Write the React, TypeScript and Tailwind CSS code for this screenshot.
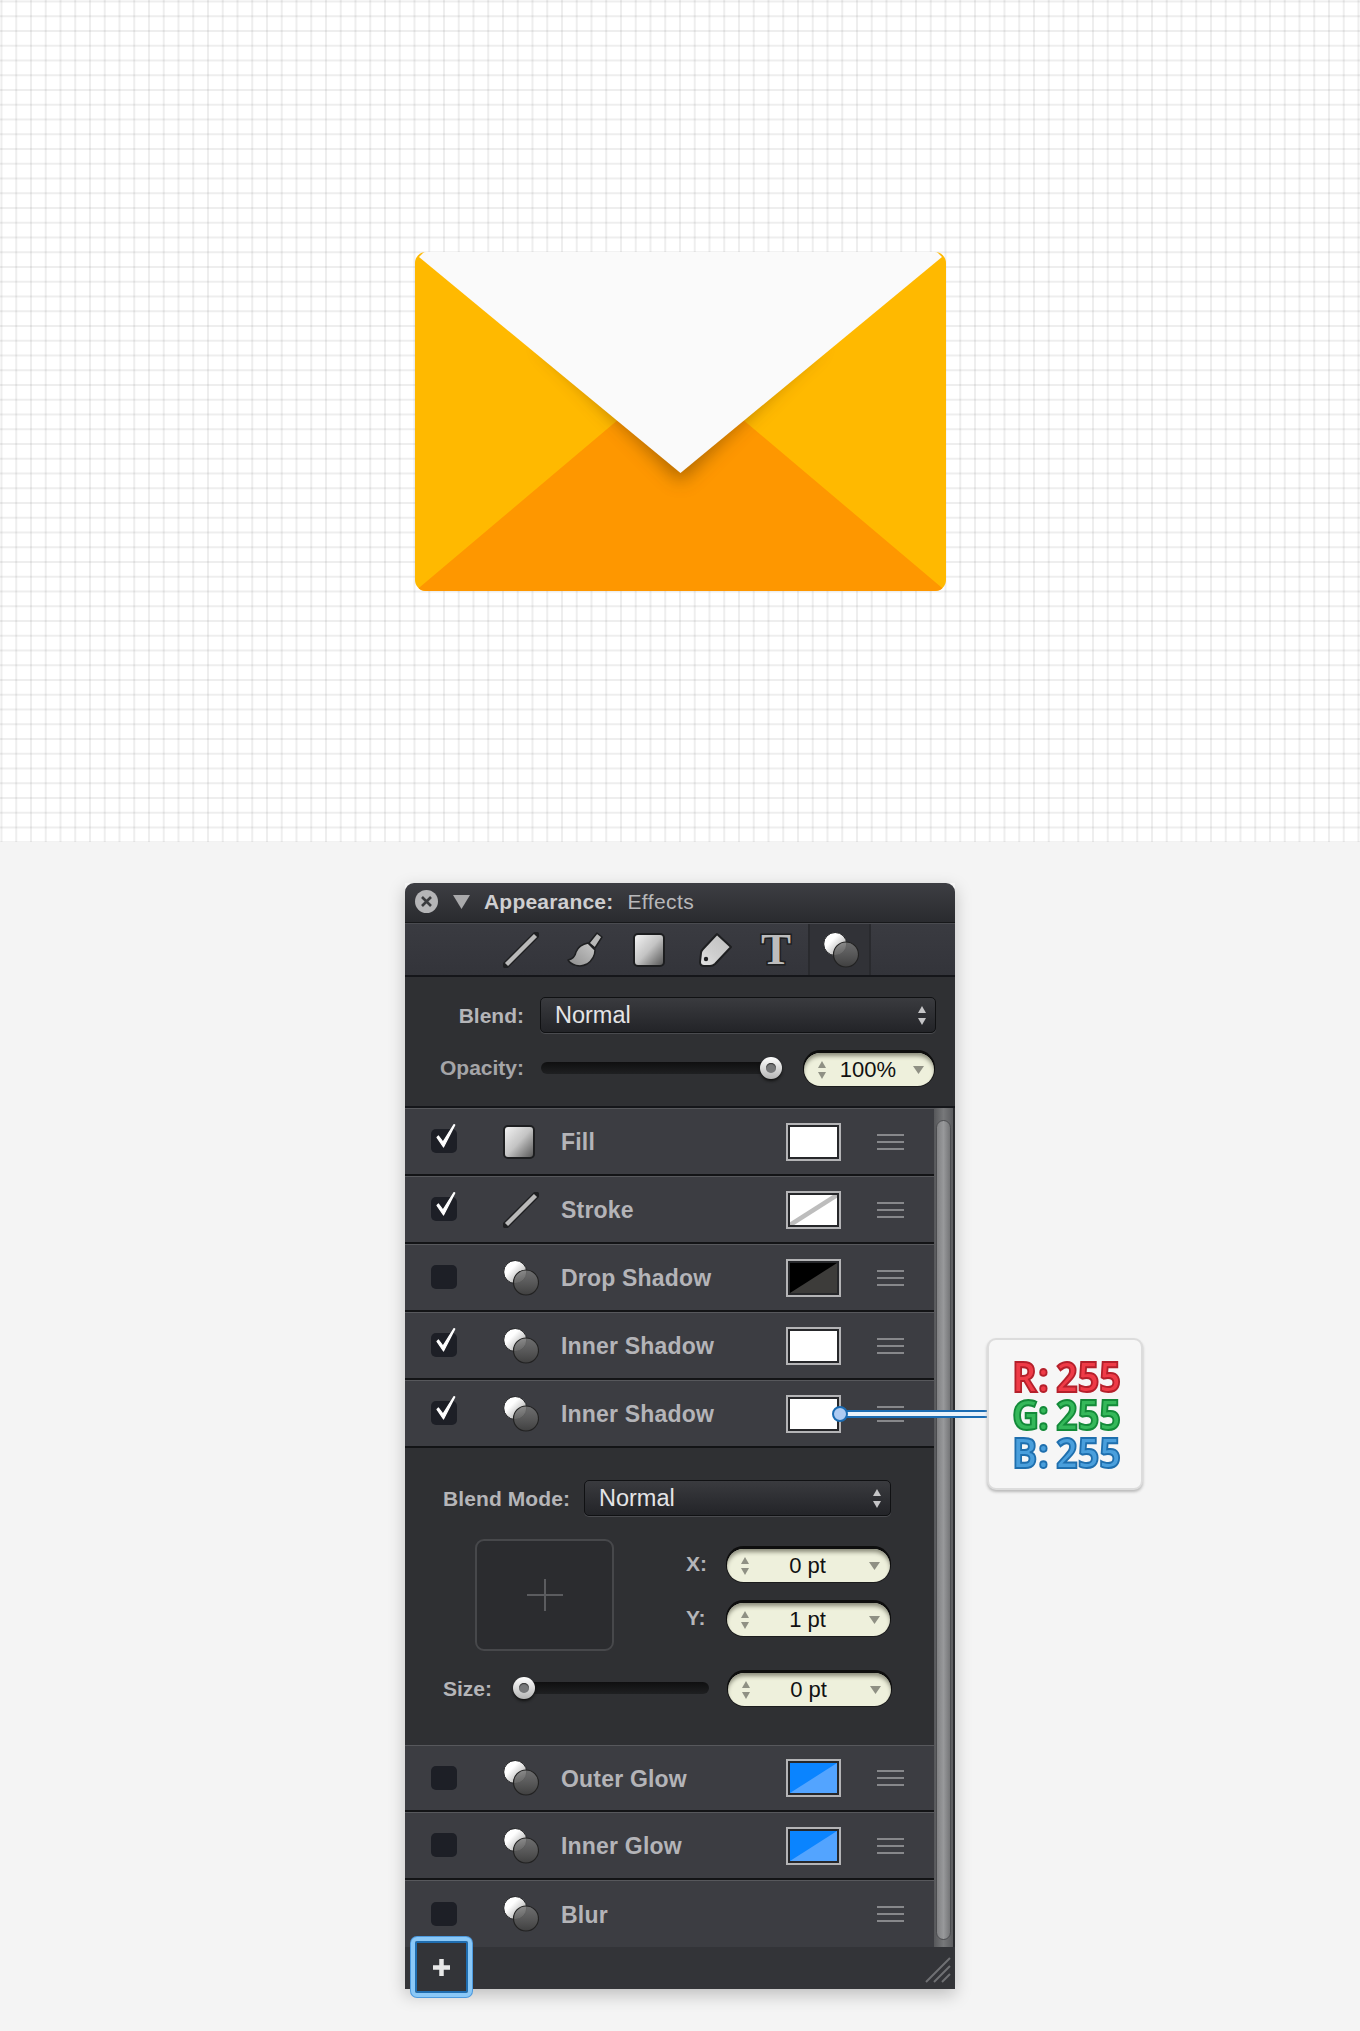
import React from 'react';

const sans = { fontFamily: '"Liberation Sans", Arial, sans-serif' };

function Envelope() {
  return (
    <svg width="531" height="339" viewBox="0 0 531 339">
      <defs>
        <clipPath id="env">
          <rect width="531" height="339" rx="11" />
        </clipPath>
        <filter id="soft" x="-20%" y="-20%" width="140%" height="140%">
          <feGaussianBlur stdDeviation="9" />
        </filter>
      </defs>
      <g clipPath="url(#env)">
        <rect width="531" height="339" fill="#ffb900" />
        <path d="M5 335 L265.5 115 L526 335 L531 339 L0 339 Z" fill="#fe9700" />
        <path d="M125 92 L406 92 L265.5 230 Z" fill="#6f4300" opacity="0.55" filter="url(#soft)" />
        <path d="M4 5 L9 0 L522 0 L527 5 L265.5 221 Z" fill="#fafafa" />
      </g>
    </svg>
  );
}

function GradSquare() {
  return (
    <div className="h-[34px] w-[32px] rounded-[5px] border-2 border-[#1d1e20] bg-gradient-to-br from-[#f2f2f2] via-[#c4c4c4] to-[#5a5a5a]" />
  );
}

function EffectIcon() {
  return (
    <svg width="36" height="36" viewBox="0 0 36 36">
      <defs>
        <linearGradient id="w" x1="0" y1="0" x2="1" y2="1">
          <stop offset="0.35" stopColor="#ffffff" />
          <stop offset="1" stopColor="#8c8c8c" />
        </linearGradient>
        <linearGradient id="d" x1="0" y1="0" x2="0" y2="1">
          <stop offset="0" stopColor="#7a7a7a" stopOpacity="0.8" />
          <stop offset="1" stopColor="#404040" stopOpacity="0.95" />
        </linearGradient>
      </defs>
      <circle cx="12.2" cy="12" r="11.5" fill="url(#w)" stroke="#1e1f21" strokeWidth="1" />
      <circle cx="23" cy="22.5" r="12.5" fill="url(#d)" stroke="#222222" strokeWidth="1.2" />
    </svg>
  );
}

function LineIcon({ id }: { id: string }) {
  return (
    <svg width="36" height="36" viewBox="0 0 36 36">
      <defs>
        <linearGradient id={id} x1="1" y1="0" x2="0" y2="1">
          <stop offset="0" stopColor="#e2e2e2" />
          <stop offset="1" stopColor="#a8a8a8" />
        </linearGradient>
      </defs>
      <path d="M3 33 L33 3" stroke="#1e1f21" strokeWidth="7" strokeLinecap="round" />
      <path d="M3.5 32.5 L32.5 3.5" stroke="#b9b9b9" strokeWidth="4.4" />
    </svg>
  );
}

function BrushIcon() {
  return (
    <svg width="36" height="36" viewBox="0 0 36 36">
      <defs>
        <linearGradient id="br" x1="1" y1="0" x2="0" y2="1">
          <stop offset="0" stopColor="#c8c8c8" />
          <stop offset="1" stopColor="#8d8d8d" />
        </linearGradient>
      </defs>
      <path d="M30 1 L35 5 L28 16 L22 11 Z" fill="#b8b8b8" stroke="#1e1f21" strokeWidth="1.5" strokeLinejoin="round" />
      <path
        d="M21 11 C16 12 11 15 9 20 C8 25 6 27 1 28 C4 33 13 36 20 32 C26 28 28 23 28 18 Z"
        fill="url(#br)"
        stroke="#1e1f21"
        strokeWidth="1.5"
        strokeLinejoin="round"
      />
    </svg>
  );
}

function TagIcon() {
  return (
    <svg width="36" height="36" viewBox="0 0 36 36">
      <defs>
        <linearGradient id="tg" x1="1" y1="0" x2="0" y2="1">
          <stop offset="0" stopColor="#bdbdbd" />
          <stop offset="0.6" stopColor="#cfcfcf" />
          <stop offset="1" stopColor="#e4e4e4" />
        </linearGradient>
      </defs>
      <path
        d="M19 2 L33 15 L17 32 Q15 34 12 34 L6 34 Q2 34 2 30 L3 21 Q3 19 5 17 Z"
        fill="url(#tg)"
        stroke="#1e1f21"
        strokeWidth="2"
        strokeLinejoin="round"
      />
      <circle cx="8" cy="27" r="2.2" fill="#1e1f21" />
    </svg>
  );
}

function UpDown({ color = '#c5c5c7', w = 7, h = 6, gap = 5 }: { color?: string; w?: number; h?: number; gap?: number }) {
  return (
    <svg width={w * 2} height={h * 2 + gap} viewBox={`0 0 ${w * 2} ${h * 2 + gap}`}>
      <path d={`M${w} 0 L${w * 2} ${h} L0 ${h} Z`} fill={color} />
      <path d={`M0 ${h + gap} L${w * 2} ${h + gap} L${w} ${h * 2 + gap} Z`} fill={color} />
    </svg>
  );
}

function Select({ className }: { className: string }) {
  return (
    <div
      className={`flex h-9 items-center justify-between rounded-[5px] border border-[#101113] bg-gradient-to-b from-[#3a3b3f] to-[#232428] pr-[9px] pl-[14px] text-[23.5px] text-[#e4e4e6] shadow-[0_1px_0_#4a4b4f] ${className}`}
    >
      <span className="pt-[2px]">Normal</span>
      <UpDown w={4} h={7} gap={5} />
    </div>
  );
}

function Pill({ value, className = '' }: { value: string; className?: string }) {
  return (
    <div
      className={`mt-[3px] flex h-[33px] items-center rounded-full bg-[#eef0dc] pr-[10px] pl-[14px] text-[22px] text-[#111] shadow-[inset_0_4px_4px_-1px_#8a8b7a,0_-2px_0_1px_#0e0e0e,0_0_0_1px_#1c1c1d] ${className}`}
    >
      <UpDown color="#8f9084" w={4} h={7} gap={4} />
      <span className="flex-1 pr-[3px] text-center">{value}</span>
      <svg width="11" height="8" viewBox="0 0 11 8">
        <path d="M0 0 L11 0 L5.5 8 Z" fill="#8f9084" />
      </svg>
    </div>
  );
}

function Knob({ className }: { className: string }) {
  return (
    <div
      className={`absolute top-[-5px] flex h-[22px] w-[22px] items-center justify-center rounded-full bg-gradient-to-b from-white to-[#b5b5b5] shadow-[0_2px_3px_#111] ${className}`}
    >
      <div className="h-[10px] w-[10px] rounded-full bg-[#77787a] shadow-[inset_0_1px_1px_#333]" />
    </div>
  );
}

function Handle() {
  return (
    <div className="flex w-[27px] flex-col gap-[5px]">
      <div className="h-[2px] bg-[#87888b]" />
      <div className="h-[2px] bg-[#87888b]" />
      <div className="h-[2px] bg-[#87888b]" />
    </div>
  );
}

function Check() {
  return (
    <svg width="26" height="36" viewBox="0 0 26 36" className="absolute top-[-10px] left-[-1px]">
      <path d="M7 18.5 L13.5 28 L24.8 6 L24 5.6 L13 23 L8.5 17 Z" fill="#ffffff" stroke="#ffffff" strokeWidth="1.2" strokeLinejoin="round" />
    </svg>
  );
}

type Swatch = 'white' | 'stroke' | 'black' | 'blue' | null;

function SwatchBox({ kind }: { kind: Swatch }) {
  if (!kind) return <div className="h-[38px] w-[55px]" />;
  return (
    <div className="h-[38px] w-[55px] border-2 border-[#b4b4b6] bg-[#26272a] p-[2px]">
      {kind === 'white' && <div className="h-full w-full bg-white" />}
      {kind === 'stroke' && (
        <svg className="block h-full w-full" viewBox="0 0 47 30" preserveAspectRatio="none">
          <rect width="47" height="30" fill="#fff" />
          <path d="M0 30 L47 0" stroke="#bdbdbd" strokeWidth="4.5" />
        </svg>
      )}
      {kind === 'black' && (
        <svg className="block h-full w-full" viewBox="0 0 47 30" preserveAspectRatio="none">
          <rect width="47" height="30" fill="#3d3c3a" />
          <path d="M0 0 H47 L0 30 Z" fill="#000" />
        </svg>
      )}
      {kind === 'blue' && (
        <svg className="block h-full w-full" viewBox="0 0 47 30" preserveAspectRatio="none">
          <rect width="47" height="30" fill="#53a4ff" />
          <path d="M0 0 H47 L0 30 Z" fill="#0a84ff" />
        </svg>
      )}
    </div>
  );
}

function Row({ label, checked, icon, swatch, h = 68, last = false }: { label: string; checked: boolean; icon: React.ReactNode; swatch: Swatch; h?: number; last?: boolean }) {
  return (
    <div
      className={`flex items-center border-t border-t-[#57585c] bg-[#3c3d42] pl-[26px] ${last ? '' : 'border-b-2 border-b-[#131416]'}`}
      style={{ height: h }}
    >
      <div className="relative -mt-px h-6 w-[26px] rounded-[5px] bg-[#1d1f26]">{checked && <Check />}</div>
      <div className="ml-[46px] flex w-[36px] justify-start">{icon}</div>
      <div className="ml-[22px] flex-1 pt-[2px] text-[23px] font-bold tracking-[0.2px] text-[#b4b4b8]">{label}</div>
      <SwatchBox kind={swatch} />
      <div className="mr-[30px] ml-[36px]">
        <Handle />
      </div>
    </div>
  );
}

function Callout() {
  const lines = [
    { l: 'R', fill: 'text-[#ef3b47] [-webkit-text-stroke:2px_#b5202b]' },
    { l: 'G', fill: 'text-[#35b85a] [-webkit-text-stroke:2px_#138a39]' },
    { l: 'B', fill: 'text-[#4a9fdc] [-webkit-text-stroke:2px_#1f6fae]' },
  ];
  return (
    <div className="absolute top-[455px] left-[582px] flex h-[152px] w-[156px] flex-col items-center justify-center rounded-[9px] border-2 border-[#dcdcdc] bg-[#f6f6f6] shadow-[0_2px_3px_#b9b9b9]">
      {lines.map((x) => (
        <div
          key={x.l}
          className={`flex h-[38px] w-[119px] origin-center scale-x-[0.9] items-center text-[42px] leading-[38px] font-bold [font-family:'Open_Sans',sans-serif] ${x.fill}`}
        >
          <span className="w-[29px] flex-none">{x.l}</span>
          <span className="w-[12px] flex-none text-center">:</span>
          <span className="ml-[8px]">255</span>
        </div>
      ))}
    </div>
  );
}

export default function App() {
  return (
    <div className="min-h-[2031px] bg-[#f4f4f4]" style={sans}>
      <div className="flex h-[842px] items-center justify-center bg-white bg-[linear-gradient(to_right,rgba(0,0,0,0.065)_2px,transparent_2px),linear-gradient(to_bottom,rgba(0,0,0,0.065)_2px,transparent_2px)] bg-[size:14.76px_14.76px] bg-[position:0.5px_0.5px]">
        <Envelope />
      </div>

      <div className="relative mx-auto mt-[41px] w-[550px] shadow-[0_6px_16px_rgba(0,0,0,0.22)]">
        {/* title bar */}
        <div className="flex h-[40px] items-center rounded-t-[9px] border-b border-[#17181a] bg-gradient-to-b from-[#3d3e43] to-[#2a2b2f] pb-[2px] pl-[10px]">
          <div className="flex h-[23px] w-[23px] items-center justify-center rounded-full bg-[#b5b5b7]">
            <svg width="11" height="11" viewBox="0 0 11 11">
              <path d="M1 1 L10 10 M10 1 L1 10" stroke="#3a3b3e" strokeWidth="2.6" />
            </svg>
          </div>
          <svg width="17" height="14" viewBox="0 0 17 14" className="ml-[15px]">
            <path d="M0 0 H17 L8.5 14 Z" fill="#a9a9ab" />
          </svg>
          <span className="ml-[14px] text-[21px] font-bold tracking-[0.2px] text-[#cfcfd1]">Appearance:</span>
          <span className="ml-[14px] text-[21px] tracking-[0.4px] text-[#b8b8ba]">Effects</span>
        </div>

        {/* toolbar */}
        <div className="flex h-[54px] items-center border-t border-b-2 border-t-[#4a4b50] border-b-[#15161a] bg-gradient-to-b from-[#3a3b41] to-[#33343a]">
          <div className="ml-[98px] flex w-[36px] justify-center">
            <LineIcon id="t1" />
          </div>
          <div className="ml-[28px] flex w-[36px] justify-center">
            <BrushIcon />
          </div>
          <div className="ml-[28px] flex w-[36px] justify-center">
            <GradSquare />
          </div>
          <div className="ml-[31px] flex w-[36px] justify-center">
            <TagIcon />
          </div>
          <div className="ml-[24px] flex h-[44px] w-[36px] items-center justify-center text-[45px] leading-none font-bold text-[#bcbcbc] [font-family:'Liberation_Serif',serif] [paint-order:stroke_fill] [-webkit-text-stroke:3px_#1e1f21]">
            T
          </div>
          <div className="ml-[14px] flex h-full w-[63px] items-center justify-center border-x-2 border-[#292a2e] bg-[#313237] pl-[3px]">
            <EffectIcon />
          </div>
        </div>

        {/* blend and opacity */}
        <div className="h-[131px] border-b-2 border-[#15161a] bg-[#2f3033] pt-[20px]">
          <div className="flex items-center">
            <div className="w-[119px] pt-[2px] text-right text-[21px] font-bold text-[#b5b5b8]">Blend:</div>
            <Select className="ml-[16px] w-[396px]" />
          </div>
          <div className="mt-[17px] flex items-center">
            <div className="w-[119px] text-right text-[21px] font-bold text-[#a5a5a8]">Opacity:</div>
            <div className="relative ml-[17px] h-[12px] w-[231px] rounded-full bg-gradient-to-b from-[#0f0f10] to-[#1f2022]">
              <Knob className="right-[-10px]" />
            </div>
            <Pill value="100%" className="ml-[32px] w-[130px]" />
          </div>
        </div>

        {/* list + scrollbar */}
        <div className="flex">
          <div className="w-[529px]">
            <Row label="Fill" checked icon={<GradSquare />} swatch="white" />
            <Row label="Stroke" checked icon={<LineIcon id="t2" />} swatch="stroke" />
            <Row label="Drop Shadow" checked={false} icon={<EffectIcon />} swatch="black" />
            <Row label="Inner Shadow" checked icon={<EffectIcon />} swatch="white" />
            <Row label="Inner Shadow" checked icon={<EffectIcon />} swatch="white" />

            <div className="h-[297px] bg-[#2f3033] pt-[32px] pl-[38px]">
              <div className="flex items-center">
                <div className="w-[141px] pt-[2px] text-[21px] font-bold tracking-[0.1px] text-[#b5b5b8]">Blend Mode:</div>
                <Select className="w-[307px]" />
              </div>
              <div className="mt-[23px] flex">
                <div className="ml-[32px] flex h-[112px] w-[139px] items-center justify-center rounded-[9px] border-2 border-[#47484b] bg-[#2b2c2f]">
                  <svg width="36" height="32" viewBox="0 0 36 32">
                    <path d="M0 16 H36 M18 0 V32" stroke="#5b5c5f" strokeWidth="2" />
                  </svg>
                </div>
                <div className="ml-[72px] flex flex-col gap-[18px] pt-[7px]">
                  <div className="flex items-center">
                    <div className="w-[41px] text-[21px] font-bold text-[#b5b5b8]">X:</div>
                    <Pill value="0 pt" className="w-[163px]" />
                  </div>
                  <div className="flex items-center">
                    <div className="w-[41px] text-[21px] font-bold text-[#b5b5b8]">Y:</div>
                    <Pill value="1 pt" className="w-[163px]" />
                  </div>
                </div>
              </div>
              <div className="mt-[19px] flex items-center">
                <div className="w-[70px] pt-[2px] text-[21px] font-bold text-[#b5b5b8]">Size:</div>
                <div className="relative h-[12px] w-[196px] rounded-full bg-gradient-to-b from-[#0f0f10] to-[#1f2022]">
                  <Knob className="left-0" />
                </div>
                <Pill value="0 pt" className="ml-[19px] w-[163px]" />
              </div>
            </div>

            <Row label="Outer Glow" checked={false} icon={<EffectIcon />} swatch="blue" h={67} />
            <Row label="Inner Glow" checked={false} icon={<EffectIcon />} swatch="blue" />
            <Row label="Blur" checked={false} icon={<EffectIcon />} swatch={null} h={67} last />
          </div>

          <div className="w-[21px] border-r-2 border-[#2a2b2e] bg-gradient-to-r from-[#56575a] via-[#77787a] to-[#5b5c5f] px-[2px] pt-[12px] pb-[7px]">
            <div className="h-full rounded-full border border-[#4c4d50] bg-gradient-to-r from-[#808183] via-[#98999b] to-[#757678]" />
          </div>
        </div>

        {/* footer */}
        <div className="flex h-[42px] items-end justify-end bg-[#333438] pr-[4px] pb-[6px]">
          <svg width="26" height="26" viewBox="0 0 26 26">
            <path d="M1 25 L25 1 M9 25 L25 9 M17 25 L25 17" stroke="#6f7073" strokeWidth="2" />
          </svg>
        </div>

        {/* add button */}
        <div className="absolute top-[1054px] left-[6px] flex h-[60px] w-[61px] items-center justify-center rounded-[6px] border-[4px] border-[#8ac8f7] bg-[#333438] shadow-[inset_0_0_0_2px_#1f6db0,0_0_0_1px_#4d9ade]">
          <svg width="17" height="17" viewBox="0 0 17 17">
            <path d="M8.5 0 V17 M0 8.5 H17" stroke="#e8e8e8" strokeWidth="4.5" />
          </svg>
        </div>

        {/* connector */}
        <div className="absolute top-[527px] left-[434px] h-[8px] w-[148px] border-y-2 border-[#1b6cb3] bg-[#e9f2fb]" />
        <div className="absolute top-[523px] left-[427px] h-[16px] w-[16px] rounded-full border-2 border-[#1b6cb3] bg-[#aecbf2]" />

        <Callout />
      </div>
    </div>
  );
}
